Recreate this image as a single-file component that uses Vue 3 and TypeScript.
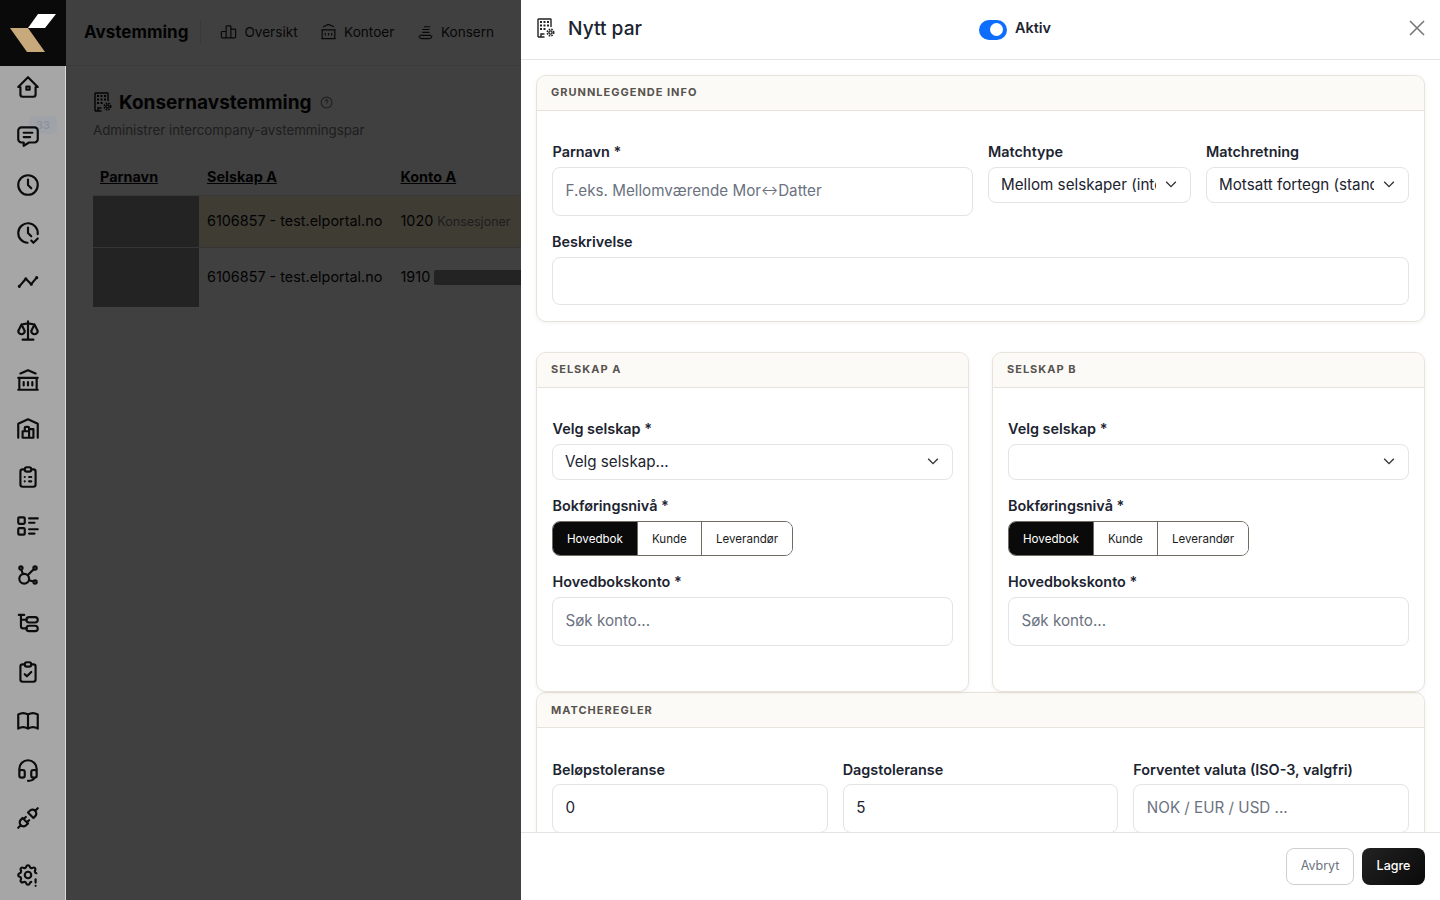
<template>
  <div class="app">
    <aside class="sidebar">
      <div class="logo">
        <svg width="66" height="66" viewBox="0 0 66 66">
          <polygon points="38,14 56,14 45,28 28,28" fill="#ffffff" />
          <polygon points="10,28 28,28 45,52 27,52" fill="#c8a97c" />
        </svg>
      </div>
      <nav class="side-nav">
        <a v-for="item in sideItems" :key="item.name" class="side-item" :class="{ bottom: item.name === 'settings' }">
          <span v-if="item.badge" class="badge">{{ item.badge }}</span>
          <svg width="26" height="26" viewBox="0 0 24 24" fill="none" stroke="currentColor" stroke-width="2" stroke-linecap="round" stroke-linejoin="round">
            <path :d="item.d" />
          </svg>
        </a>
      </nav>
    </aside>

    <main class="main">
      <header class="topbar">
        <strong class="brand">Avstemming</strong>
        <span class="divider"></span>
        <a class="tab">
          <svg width="19" height="19" viewBox="0 0 24 24" fill="none" stroke="currentColor" stroke-width="1.5"><path d="M3 13a1 1 0 0 1 1-1h4a1 1 0 0 1 1 1v7H4a1 1 0 0 1-1-1zM9 6a1 1 0 0 1 1-1h4a1 1 0 0 1 1 1v14H9zM15 10a1 1 0 0 1 1-1h4a1 1 0 0 1 1 1v9a1 1 0 0 1-1 1h-5z" /></svg>
          Oversikt
        </a>
        <a class="tab">
          <svg width="19" height="19" viewBox="0 0 24 24" fill="none" stroke="currentColor" stroke-width="1.5"><path d="M3 21h18M3 10h18M5 6l7-3 7 3M4 10v11M20 10v11M8 14v3M12 14v3M16 14v3" /></svg>
          Kontoer
        </a>
        <a class="tab">
          <svg width="19" height="19" viewBox="0 0 24 24" fill="none" stroke="currentColor" stroke-width="1.5"><path d="M4 17c0 3 2 4 4 4h8c2 0 4-1 4-4M5 17h14M8 13h9M8 9.500h9M10 6h8" /></svg>
          Konsern
        </a>
      </header>

      <section class="page">
        <div class="page-title">
          <svg class="building" width="18" height="20" viewBox="0 0 18 20" fill="none" stroke="currentColor" stroke-width="1.4">
            <path :d="buildingPath" />
            <path :d="buildingDots" stroke-width="2" />
            <circle cx="13.5" cy="14.5" r="1.6" />
            <circle cx="13.5" cy="14.5" r="3.3" stroke-dasharray="1.6 1.05" />
          </svg>
          <h1>Konsernavstemming</h1>
          <svg width="13" height="13" viewBox="0 0 24 24" fill="none" stroke="currentColor" stroke-width="2"><circle cx="12" cy="12" r="10" /><path d="M9.5 9.500a2.500 2.500 0 1 1 3.500 2.300c-.7.3-1 .8-1 1.700M12 17v.01" /></svg>
        </div>
        <p class="page-sub">Administrer intercompany-avstemmingspar</p>

        <div class="table">
          <div class="table-row table-head">
            <span>Parnavn</span>
            <span>Selskap A</span>
            <span>Konto A</span>
          </div>
          <div class="table-row row-one">
            <span class="redacted"></span>
            <span>6106857 - test.elportal.no</span>
            <span>1020 <small>Konsesjoner</small></span>
          </div>
          <div class="table-row row-two">
            <span class="redacted"></span>
            <span>6106857 - test.elportal.no</span>
            <span class="acct">1910 <i class="redacted-bar"></i></span>
          </div>
        </div>
      </section>
      <div class="overlay"></div>
    </main>

    <div class="drawer">
      <div class="drawer-head">
        <svg class="head-icon" width="18" height="20" viewBox="0 0 18 20" fill="none" stroke="currentColor" stroke-width="1.4">
          <path :d="buildingPath" />
          <path :d="buildingDots" stroke-width="2" />
          <circle cx="13.5" cy="14.5" r="1.6" />
          <circle cx="13.5" cy="14.5" r="3.3" stroke-dasharray="1.6 1.05" />
        </svg>
        <h2>Nytt par</h2>
        <label class="active-toggle">
          <span class="switch"><span class="knob"></span></span>
          Aktiv
        </label>
        <button class="close" aria-label="Lukk">
          <svg width="16" height="16" viewBox="0 0 16 16" fill="none" stroke="currentColor" stroke-width="1.6"><path d="M1 1l14 14M15 1L1 15" /></svg>
        </button>
      </div>

      <div class="drawer-body">
        <section class="card">
          <div class="card-head">Grunnleggende info</div>
          <div class="card-body basic-grid">
            <div class="field">
              <label>Parnavn *</label>
              <!-- placeholder som egen tekst, pila skal vaere mindre enn resten -->
              <div class="input hint">F.eks. Mellomværende Mor<span class="arrow">↔</span>Datter</div>
            </div>
            <div class="field">
              <label>Matchtype</label>
              <div class="select-wrap">
                <select class="select"><option>Mellom selskaper (intercompany)</option></select>
                <svg class="chevron" width="14" height="14" viewBox="0 0 16 16" fill="none" stroke="currentColor" stroke-width="1.6"><path d="M2.5 5.500L8 11l5.500-5.500" /></svg>
              </div>
            </div>
            <div class="field">
              <label>Matchretning</label>
              <div class="select-wrap">
                <select class="select"><option>Motsatt fortegn (standard)</option></select>
                <svg class="chevron" width="14" height="14" viewBox="0 0 16 16" fill="none" stroke="currentColor" stroke-width="1.6"><path d="M2.5 5.500L8 11l5.500-5.500" /></svg>
              </div>
            </div>
            <div class="field wide">
              <label>Beskrivelse</label>
              <input class="input" />
            </div>
          </div>
        </section>

        <div class="company-row">
          <section v-for="company in companies" :key="company.title" class="card company">
            <div class="card-head">{{ company.title }}</div>
            <div class="card-body stack">
              <div class="field">
                <label>Velg selskap *</label>
                <div class="select-wrap">
                  <select class="select"><option>{{ company.selected }}</option></select>
                  <svg class="chevron" width="14" height="14" viewBox="0 0 16 16" fill="none" stroke="currentColor" stroke-width="1.6"><path d="M2.5 5.500L8 11l5.500-5.500" /></svg>
                </div>
              </div>
              <div class="field">
                <label>Bokføringsnivå *</label>
                <div class="segments">
                  <button v-for="level in levels" :key="level" class="segment" :class="{ on: level === 'Hovedbok' }">{{ level }}</button>
                </div>
              </div>
              <div class="field">
                <label>Hovedbokskonto *</label>
                <input class="input" placeholder="Søk konto..." />
              </div>
            </div>
          </section>
        </div>

        <section class="card rules">
          <div class="card-head">Matcheregler</div>
          <div class="card-body rules-grid">
            <div class="field">
              <label>Beløpstoleranse</label>
              <input class="input" value="0" />
            </div>
            <div class="field">
              <label>Dagstoleranse</label>
              <input class="input" value="5" />
            </div>
            <div class="field">
              <label>Forventet valuta (ISO-3, valgfri)</label>
              <input class="input" placeholder="NOK / EUR / USD ..." />
            </div>
          </div>
        </section>
      </div>

      <div class="drawer-foot">
        <button class="btn-cancel">Avbryt</button>
        <button class="btn-save">Lagre</button>
      </div>
    </div>
  </div>
</template>

<script setup lang="ts">
interface SideItem {
  name: string
  d: string
  badge?: number
}

const clipboard = 'M9 5H7a2 2 0 0 0-2 2v12a2 2 0 0 0 2 2h10a2 2 0 0 0 2-2V7a2 2 0 0 0-2-2h-2M9 5a2 2 0 0 1 2-2h2a2 2 0 0 1 2 2v0a2 2 0 0 1-2 2h-2a2 2 0 0 1-2-2z'

const sideItems: SideItem[] = [
  { name: 'home', d: 'M5 12H3l9-9 9 9h-2M5 12v7a2 2 0 0 0 2 2h10a2 2 0 0 0 2-2v-7M10.500 11.500h3v3h-3z' },
  { name: 'messages', badge: 33, d: 'M8 9h8M8 13h6M18 4a3 3 0 0 1 3 3v8a3 3 0 0 1-3 3h-5l-5 3v-3H6a3 3 0 0 1-3-3V7a3 3 0 0 1 3-3z' },
  { name: 'clock', d: 'M3 12a9 9 0 1 0 18 0a9 9 0 1 0-18 0M12 7v5l3 3' },
  { name: 'clock-check', d: 'M20.940 13.020a9 9 0 1 0-9.400 7.970M12 7v5l3 3M15 19l2 2 4-4' },
  { name: 'timeline', d: 'M4 16l6-7 5 5 5-6M14.500 14a.5.5 0 1 0 1 0a.5.5 0 1 0-1 0M9.500 9a.5.5 0 1 0 1 0a.5.5 0 1 0-1 0M3.500 16a.5.5 0 1 0 1 0a.5.5 0 1 0-1 0M19.500 8a.5.5 0 1 0 1 0a.5.5 0 1 0-1 0' },
  { name: 'scale', d: 'M7 20h10M6 6l6-1 6 1M12 3v17M9 12L6 6l-3 6a3 3 0 0 0 6 0M21 12l-3-6-3 6a3 3 0 0 0 6 0' },
  { name: 'bank', d: 'M3 21h18M3 10h18M5 6l7-3 7 3M4 10v11M20 10v11M8 14v3M12 14v3M16 14v3' },
  { name: 'warehouse', d: 'M3 21V8l9-4 9 4v13M13 13h4v8H7v-6h6M13 21v-9a1 1 0 0 0-1-1h-2a1 1 0 0 0-1 1v3' },
  { name: 'clipboard-list', d: clipboard + 'M9 12h.01M13 12h2M9 16h.01M13 16h2' },
  { name: 'list-details', d: 'M13 5h8M13 9h5M13 15h8M13 19h5M4 4h4a1 1 0 0 1 1 1v4a1 1 0 0 1-1 1H4a1 1 0 0 1-1-1V5a1 1 0 0 1 1-1zM4 14h4a1 1 0 0 1 1 1v4a1 1 0 0 1-1 1H4a1 1 0 0 1-1-1v-4a1 1 0 0 1 1-1z' },
  { name: 'affiliate', d: 'M5.930 6.940l1.280 4.250M12.810 16.790l4.250 1.280M11.680 12.320l5.760-5.760M4 5.500a1.500 1.500 0 1 0 3 0a1.500 1.500 0 1 0-3 0M17 5.500a1.500 1.500 0 1 0 3 0a1.500 1.500 0 1 0-3 0M17 18.500a1.500 1.500 0 1 0 3 0a1.500 1.500 0 1 0-3 0M4 15.500a4.500 4.500 0 1 0 9 0a4.500 4.500 0 1 0-9 0' },
  { name: 'tree', d: 'M3.500 4.500h5M5.500 4.500V15a2 2 0 0 0 2 2H11M5.500 9H11M13 6.500h5.500a2.500 2.500 0 0 1 0 5H13a2.500 2.500 0 0 1 0-5zM13 14.500h5.500a2.500 2.500 0 0 1 0 5H13a2.500 2.500 0 0 1 0-5z' },
  { name: 'clipboard-check', d: clipboard + 'M9 14l2 2 4-4' },
  { name: 'book', d: 'M3 19a9 9 0 0 1 9 0a9 9 0 0 1 9 0M3 6a9 9 0 0 1 9 0a9 9 0 0 1 9 0M3 6v13M12 6v13M21 6v13' },
  { name: 'headset', d: 'M4 14v-3a8 8 0 1 1 16 0v3M18 19c0 1.660-2.690 3-6 3M4 14a2 2 0 0 1 2-2h1a2 2 0 0 1 2 2v3a2 2 0 0 1-2 2H6a2 2 0 0 1-2-2zM15 14a2 2 0 0 1 2-2h1a2 2 0 0 1 2 2v3a2 2 0 0 1-2 2h-1a2 2 0 0 1-2-2z' },
  { name: 'plug', d: 'M7 12l5 5-1.500 1.500a3.540 3.540 0 1 1-5-5zM17 12l-5-5 1.500-1.500a3.540 3.540 0 1 1 5 5zM3 21l2.500-2.500M18.500 5.500L21 3M10 11l-2 2M13 14l-2 2' },
  { name: 'settings', d: 'M15 18.400a1.720 1.720 0 0 0-1.330 1.280c-.43 1.760-2.920 1.760-3.350 0a1.720 1.720 0 0 0-2.570-1.070c-1.540.94-3.310-.83-2.370-2.370a1.720 1.720 0 0 0-1.070-2.570c-1.760-.43-1.760-2.920 0-3.350a1.720 1.720 0 0 0 1.070-2.570c-.94-1.540.83-3.310 2.370-2.370 1 .61 2.300.07 2.570-1.070.43-1.760 2.920-1.760 3.350 0a1.720 1.720 0 0 0 2.570 1.070c1.540-.94 3.310.83 2.370 2.370a1.720 1.720 0 0 0 1.070 2.570M9 12a3 3 0 1 0 6 0a3 3 0 0 0-6 0M19 16v3M19 22v.01' }
]

const buildingPath = 'M1 19V1.500a.5.5 0 0 1 .5-.5h12a.5.5 0 0 1 .5.5V9M1 19h6.500M4 19v-3h3.500'
const buildingDots = 'M3 4h2M6.500 4h2M10 4h2M3 7.500h2M6.500 7.500h2M10 7.500h2M3 11h2M6.500 11h2'

const companies = [
  { title: 'Selskap A', selected: 'Velg selskap...' },
  { title: 'Selskap B', selected: '' }
]

const levels = ['Hovedbok', 'Kunde', 'Leverandør']
</script>

<style>
html,
body {
  margin: 0;
  height: 100%;
  overflow: hidden;
}
</style>

<style scoped>
* {
  box-sizing: border-box;
}

.app {
  display: flex;
  height: 100vh;
  font-family: Inter, "Noto Sans", sans-serif;
  color: #1c2430;
}

.sidebar {
  width: 66px;
  flex-shrink: 0;
  display: flex;
  flex-direction: column;
  background: #a6a6a6;
  border-right: 1px solid #d9d9d9;
}

.logo {
  width: 66px;
  height: 66px;
  background: #0a0a0a;
  flex-shrink: 0;
}

.logo svg {
  display: block;
}

.side-nav {
  flex: 1;
  display: flex;
  flex-direction: column;
  gap: 22.75px;
  padding: 8px 0 12px;
}

.side-item {
  position: relative;
  height: 26px;
  padding-left: 15px;
  color: #0c0c0c;
}

.side-item svg {
  position: relative;
  display: block;
}

.side-item.bottom {
  margin-top: auto;
}

.badge {
  position: absolute;
  top: -7px;
  left: 29px;
  width: 28px;
  height: 18px;
  border-radius: 5px;
  background: #9fa2a7;
  color: #8b909b;
  font-size: 11px;
  line-height: 18px;
  font-weight: 500;
  text-align: center;
}

.main {
  position: relative;
  flex: 1;
  min-width: 0;
  overflow: hidden;
  background: #fff;
  color: #0b0b0b;
}

.overlay {
  position: absolute;
  inset: 0;
  background: rgba(0, 0, 0, 0.75);
}

.topbar {
  height: 66px;
  display: flex;
  align-items: center;
  padding: 0 0 2px 18px;
  border-bottom: 1px solid #ececec;
}

.brand {
  font-size: 17px;
  font-weight: 700;
}

.divider {
  width: 1px;
  height: 24px;
  margin: 0 18px 0 12px;
  background: #e4e4e4;
}

.tab {
  display: flex;
  align-items: center;
  gap: 6px;
  margin-right: 21.5px;
  font-size: 13.6px;
  color: #222;
}

.page {
  padding: 24px 0 0 27px;
}

.page-title {
  display: flex;
  align-items: center;
  height: 24px;
}

.building {
  margin: 0 7px 0 1px;
}

h1 {
  margin: 0 8px 0 0;
  font-size: 19px;
  font-weight: 700;
}

.page-title > svg:last-child {
  color: #777;
}

.page-sub {
  margin: 6px 0 0;
  font-size: 13.3px;
  line-height: 20px;
  color: #777;
}

.table {
  width: 700px;
  margin-top: 19px;
  font-size: 14.4px;
}

.table-row {
  display: grid;
  grid-template-columns: 106px 193.5px 1fr;
  align-items: center;
}

.table-row > span:not(.redacted) {
  padding: 0 0 2px 8px;
}

.table-head {
  height: 37px;
  font-weight: 700;
  border-bottom: 1px solid #e0e0e0;
  text-decoration: underline;
}

.table-head > span:first-child {
  padding-left: 7px;
}

.row-one {
  height: 52px;
  background: #fbedcf;
  border-bottom: 1px solid #d8d8d8;
}

.row-two {
  height: 59px;
}

.redacted {
  align-self: stretch;
  background: #8c8c8c;
}

small {
  font-size: 12.5px;
  color: #777;
}

.acct {
  display: flex;
  align-items: center;
  gap: 4px;
}

.redacted-bar {
  width: 300px;
  height: 15px;
  margin-top: 2px;
  background: #8c8c8c;
  border-radius: 2px;
}

.drawer {
  position: fixed;
  top: 0;
  right: 0;
  bottom: 0;
  width: 919px;
  display: flex;
  flex-direction: column;
  background: #fff;
  font-family: Inter, "Noto Sans", sans-serif;
  color: #1c2430;
}

.drawer-head {
  height: 60px;
  flex-shrink: 0;
  display: flex;
  align-items: center;
  padding: 0 15px 3px 16px;
  border-bottom: 1px solid #e4e4e4;
}

.head-icon {
  margin-right: 13px;
  color: #222;
}

h2 {
  margin: 0;
  font-size: 19.2px;
  font-weight: 500;
  line-height: 24px;
}

.active-toggle {
  display: flex;
  align-items: center;
  gap: 8px;
  margin-left: 337px;
  font-size: 14.4px;
  font-weight: 600;
  line-height: 20px;
}

.switch {
  display: flex;
  align-items: center;
  justify-content: flex-end;
  width: 28px;
  height: 20px;
  padding-right: 4px;
  margin-top: 3px;
  border-radius: 10px;
  background: #0d6efd;
}

.knob {
  width: 13px;
  height: 13px;
  border-radius: 50%;
  background: #fff;
}

.close {
  margin-left: auto;
  padding: 0;
  border: none;
  background: transparent;
  color: #777;
  display: flex;
}

.drawer-body {
  flex: 1;
  min-height: 0;
  overflow: hidden;
  padding: 15px 15px 0;
}

.card {
  border: 1px solid #e8e3da;
  border-radius: 10px;
  background: #fff;
  box-shadow: 0 1px 4px rgba(60, 50, 30, 0.06);
}

.card-head {
  height: 35px;
  padding: 0 14px 2px;
  display: flex;
  align-items: center;
  background: #fcfaf6;
  border-bottom: 1px solid #e8e3da;
  border-radius: 10px 10px 0 0;
  font-size: 11px;
  font-weight: 700;
  letter-spacing: 1px;
  text-transform: uppercase;
  color: #57534e;
}

.rules .card-head {
  padding-bottom: 0;
}

.card-body {
  padding: 31px 15px 16px;
}

.basic-grid {
  display: grid;
  grid-template-columns: 421px 203px 203px;
  gap: 16px 15px;
  align-items: start;
}

.wide {
  grid-column: 1 / -1;
}

.company-row {
  display: grid;
  grid-template-columns: 433px 433px;
  justify-content: space-between;
  margin-top: 30px;
}

.company {
  height: 340px;
}

.stack {
  display: flex;
  flex-direction: column;
  gap: 16px;
}

.rules {
  border-radius: 10px 10px 0 0;
}

.rules-grid {
  display: grid;
  grid-template-columns: repeat(3, 1fr);
  gap: 15px;
  padding-top: 32px;
}

.field {
  display: flex;
  flex-direction: column;
}

label {
  font-size: 14.4px;
  font-weight: 600;
  line-height: 20px;
}

.field > label {
  margin-bottom: 5px;
}

.company:first-child .field > label,
.basic-grid .field:first-child > label,
.rules-grid .field:first-child > label {
  padding-left: 0.5px;
}

.rules-grid .field > label {
  margin-bottom: 4px;
}

.input {
  width: 100%;
  height: 49px;
  padding: 0 12.5px 2px;
  border: 1px solid #e3e3e8;
  border-radius: 8px;
  background: #fff;
  font: 400 15.2px Inter, "Noto Sans", sans-serif;
  color: #1c2430;
  outline: none;
}

.wide .input {
  height: 48px;
}

.input::placeholder {
  color: #6b7280;
  opacity: 1;
}

.hint {
  display: flex;
  align-items: center;
  color: #6b7280;
}

.arrow {
  font-size: 12.8px;
}

.select-wrap {
  position: relative;
}

.select {
  display: block;
  width: 100%;
  height: 36px;
  padding: 0 34.5px 2px 12px;
  border: 1px solid #e3e3e8;
  border-radius: 8px;
  background: #fff;
  appearance: none;
  font: 400 15.2px Inter, "Noto Sans", sans-serif;
  color: #1c2430;
  outline: none;
}

.chevron {
  position: absolute;
  top: 10px;
  right: 13px;
  color: #333;
}

.segments {
  display: inline-flex;
  align-self: flex-start;
  height: 35px;
  border: 1px solid #6f6a62;
  border-radius: 8px;
  overflow: hidden;
}

.segment {
  padding: 0 14px;
  border: none;
  border-left: 1px solid #6f6a62;
  background: #fff;
  font: 400 11.6px Inter, "Noto Sans", sans-serif;
  color: #1c1c1c;
}

.segment:first-child {
  border-left: none;
}

.segment.on {
  background: #0a0a0a;
  color: #fff;
}

.drawer-foot {
  height: 68px;
  flex-shrink: 0;
  display: flex;
  justify-content: flex-end;
  align-items: flex-start;
  gap: 8px;
  padding: 15px 15px 0;
  border-top: 1px solid #e4e4e4;
}

.btn-cancel,
.btn-save {
  height: 37px;
  padding: 0 0 2px;
  border-radius: 8px;
  font: 400 12.5px Inter, "Noto Sans", sans-serif;
}

.btn-cancel {
  width: 68px;
  border: 1px solid #cfcfcf;
  background: #fff;
  color: #6b7280;
}

.btn-save {
  width: 63px;
  border: none;
  background: linear-gradient(135deg, #222, #0a0a0a);
  color: #fff;
  font-weight: 500;
}
</style>
